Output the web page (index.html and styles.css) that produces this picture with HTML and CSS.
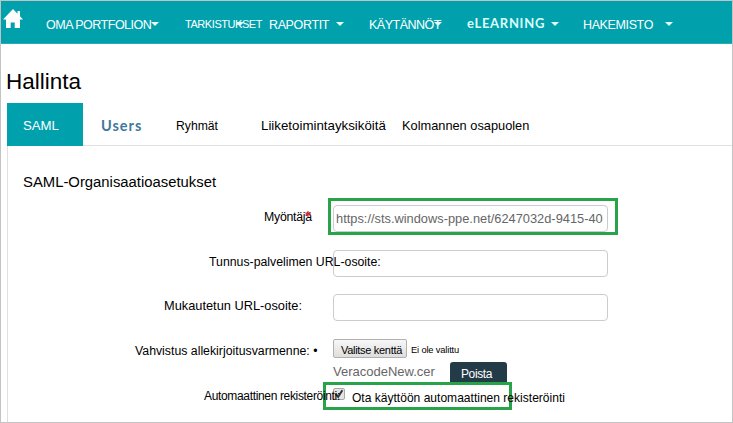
FILE: index.html
```html
<!DOCTYPE html>
<html lang="fi">
<head>
<meta charset="utf-8">
<title>Hallinta</title>
<link rel="stylesheet" href="styles.css">
</head>
<body>
<div class="window">
  <nav class="nav">
    <svg class="home" viewBox="0 0 20 19"><path fill="#fff" d="M10 0 0 10.500h3V19h4.700v-5.500h4V19H17v-8.500h3l-3-3.200V2h-2.500v2.800z"/></svg>
    <a class="item portfolio"><span>OMA PORTFOLION</span><i class="caret"></i></a>
    <a class="item reviews"><span>TARKISTUKSET</span><i class="caret"></i></a>
    <a class="item reports"><span>RAPORTIT</span><i class="caret"></i></a>
    <a class="item policies"><span>KÄYTÄNNÖT</span><i class="caret"></i></a>
    <a class="item elearning"><span>eLEARNING</span><i class="caret"></i></a>
    <a class="item directory"><span>HAKEMISTO</span><i class="caret"></i></a>
  </nav>
  <h1>Hallinta</h1>
  <div class="tabs">
    <a class="tab active">SAML</a>
    <a class="tab users">Users</a>
    <a class="tab groups">Ryhmät</a>
    <a class="tab units">Liiketoimintayksiköitä</a>
    <a class="tab third">Kolmannen osapuolen</a>
  </div>
  <section class="panel">
    <h2>SAML-Organisaatioasetukset</h2>
    <div class="row issuer">
      <label>Myöntäjä<svg class="required" viewBox="0 0 6 6"><path d="M3 0v6M.3 1.800l5.400 2.400M5.700 1.800.3 4.200" stroke="#d0262e" stroke-width="1.100"/></svg></label>
      <div class="field">https://sts.windows-ppe.net/6247032d-9415-40</div>
    </div>
    <div class="row idp">
      <label>Tunnus-palvelimen URL-osoite:</label>
      <div class="field"></div>
    </div>
    <div class="row custom">
      <label>Mukautetun URL-osoite:</label>
      <div class="field"></div>
    </div>
    <div class="row cert">
      <label>Vahvistus allekirjoitusvarmenne: •</label>
      <div class="file"><span class="choose">Valitse kenttä</span><span class="none">Ei ole valittu</span></div>
    </div>
    <div class="row current">
      <span></span>
      <div class="file"><span class="name">VeracodeNew.cer</span><span class="remove">Poista</span></div>
    </div>
    <div class="row auto">
      <label>Automaattinen rekisteröinti:</label>
      <div class="enable">
        <span class="check"><svg viewBox="0 0 12 12"><path d="M2 6 5 9.500l5-8" fill="none" stroke="#333" stroke-width="2.400"/></svg></span>
        <span class="enable-text">Ota käyttöön automaattinen rekisteröinti</span>
      </div>
    </div>
  </section>
</div>
</body>
</html>
```
FILE: styles.css
```css
*, *::before, *::after { box-sizing: border-box; }
body {
  margin: 0;
  background: #fff;
  color: #000;
  font-family: "Liberation Sans", Arial, sans-serif;
  overflow: hidden;
}
.window {
  width: 733px;
  height: 423px;
  border: 1px solid #c3c3c3;
  overflow: hidden;
}
h1, h2 { margin: 0; font-weight: normal; white-space: nowrap; }

.nav {
  display: grid;
  grid-template-columns: 45px 139px 84px 100px 98px 116px 1fr;
  align-items: start;
  height: 43px;
  background: #00a1ad;
  border-bottom: 1px solid #2aa9b3;
}
.home { width: 20px; height: 19px; margin: 8px 0 0 2px; }
.item {
  display: flex;
  align-items: flex-start;
  margin-top: 14px;
  color: #fff;
  font-size: 12.5px;
  line-height: 20px;
  white-space: nowrap;
}
.caret {
  flex: none;
  width: 8px;
  margin-top: 7px;
  border: 4px solid transparent;
  border-top-color: #e4fbfb;
  border-bottom: 0;
}
.portfolio { letter-spacing: -.5px; }
.reviews { font-size: 11px; letter-spacing: -.44px; margin-top: 13px; }
.reviews .caret { margin-left: -26px; margin-top: 8px; }
.reports { letter-spacing: -.37px; }
.reports .caret { margin-left: 7px; }
.policies { letter-spacing: -.49px; }
.policies .caret { margin-left: -7px; }
.elearning { font: bold 13px/20px Lato, sans-serif; letter-spacing: .7px; margin-top: 12px; color: #dcfcfa; }
.elearning .caret { margin-left: 6px; margin-top: 9px; }
.directory { letter-spacing: -.38px; }
.directory .caret { margin-left: 12px; }

h1 { margin: 24px 0 0 5px; font-size: 22.5px; line-height: 28px; }

.tabs {
  display: grid;
  grid-template-columns: 76px 76px 85px 141px 1fr;
  height: 42px;
  margin: 7px 0 0 6px;
  line-height: 46px;
  white-space: nowrap;
}
.tab { padding-left: 17px; font-size: 12.8px; }
.active {
  position: relative;
  height: 43px;
  padding-left: 16px;
  background: #00a1ad;
  color: #fff;
  font-size: 13.2px;
}
.users { padding-left: 18px; font: bold 14.5px/45px Lato, sans-serif; letter-spacing: 1px; color: #41789c; }
.groups { font-size: 12.2px; line-height: 46px; }
.units { font-size: 13.3px; }

.panel {
  height: 278px;
  margin-left: 6px;
  border: solid #e0e0e0;
  border-width: 1px 0 0 1px;
}
h2 { margin: 26px 0 0 15px; font-size: 14.85px; line-height: 20px; }
.row { display: grid; grid-template-columns: 325px 1fr; height: 27px; }
label { position: relative; z-index: 1; white-space: nowrap; line-height: 24px; }
.field {
  width: 275px;
  height: 27px;
  border: 1px solid #ccc;
  border-radius: 4px;
  padding-left: 2px;
  font-size: 12.84px;
  line-height: 26px;
  color: #666;
  white-space: nowrap;
}
.issuer { position: relative; margin-top: 13px; }
.issuer::after {
  content: "";
  position: absolute;
  left: 320px;
  top: -7px;
  width: 290px;
  height: 37px;
  border: 3px solid #29a34a;
}
.issuer > label { padding-left: 256px; font-size: 12.3px; letter-spacing: -.25px; }
.required { position: absolute; left: 297px; top: 6px; width: 6px; height: 6px; }
.idp { margin-top: 18px; }
.idp label { padding-left: 201px; font-size: 12.3px; }
.custom { margin-top: 17px; }
.custom label { padding-left: 156px; font-size: 12.8px; }
.cert { margin-top: 18px; height: 19px; }
.cert label { padding-left: 127px; font-size: 12.3px; }
.file { display: flex; white-space: nowrap; }
.choose {
  width: 74px;
  height: 19px;
  padding-left: 7px;
  border: 1px solid #b0b0b0;
  border-radius: 2px;
  background: linear-gradient(#f7f7f7, #dedede);
  font-size: 11px;
  letter-spacing: -.3px;
  line-height: 21px;
}
.none { margin-left: 4px; font-size: 9.3px; letter-spacing: -.15px; line-height: 22px; }
.current { margin-top: 4px; height: 21px; }
.name { width: 117px; color: #666; font-size: 13px; line-height: 19px; }
.remove {
  width: 57px;
  height: 21px;
  padding-left: 11px;
  border-radius: 3px 3px 0 0;
  background: #233b47;
  color: #fff;
  font-size: 12px;
  letter-spacing: -.4px;
  line-height: 24px;
}
.auto { position: relative; height: 28px; margin-top: -1px; }
.auto::before {
  content: "";
  position: absolute;
  left: 315px;
  top: 0;
  width: 189px;
  height: 28px;
  border: 3px solid #29a34a;
}
.auto label { padding-left: 196px; font-size: 12px; letter-spacing: -.34px; line-height: 29px; }
.enable { display: flex; position: relative; }
.check {
  width: 12px;
  height: 12px;
  margin-top: 6px;
  border: 1px solid #aaa;
  border-radius: 2px;
  background: #e4e4e4;
}
.check svg { display: block; width: 10px; height: 10px; }
.enable-text { margin-left: 7px; font-size: 12.05px; line-height: 32px; white-space: nowrap; }
```
